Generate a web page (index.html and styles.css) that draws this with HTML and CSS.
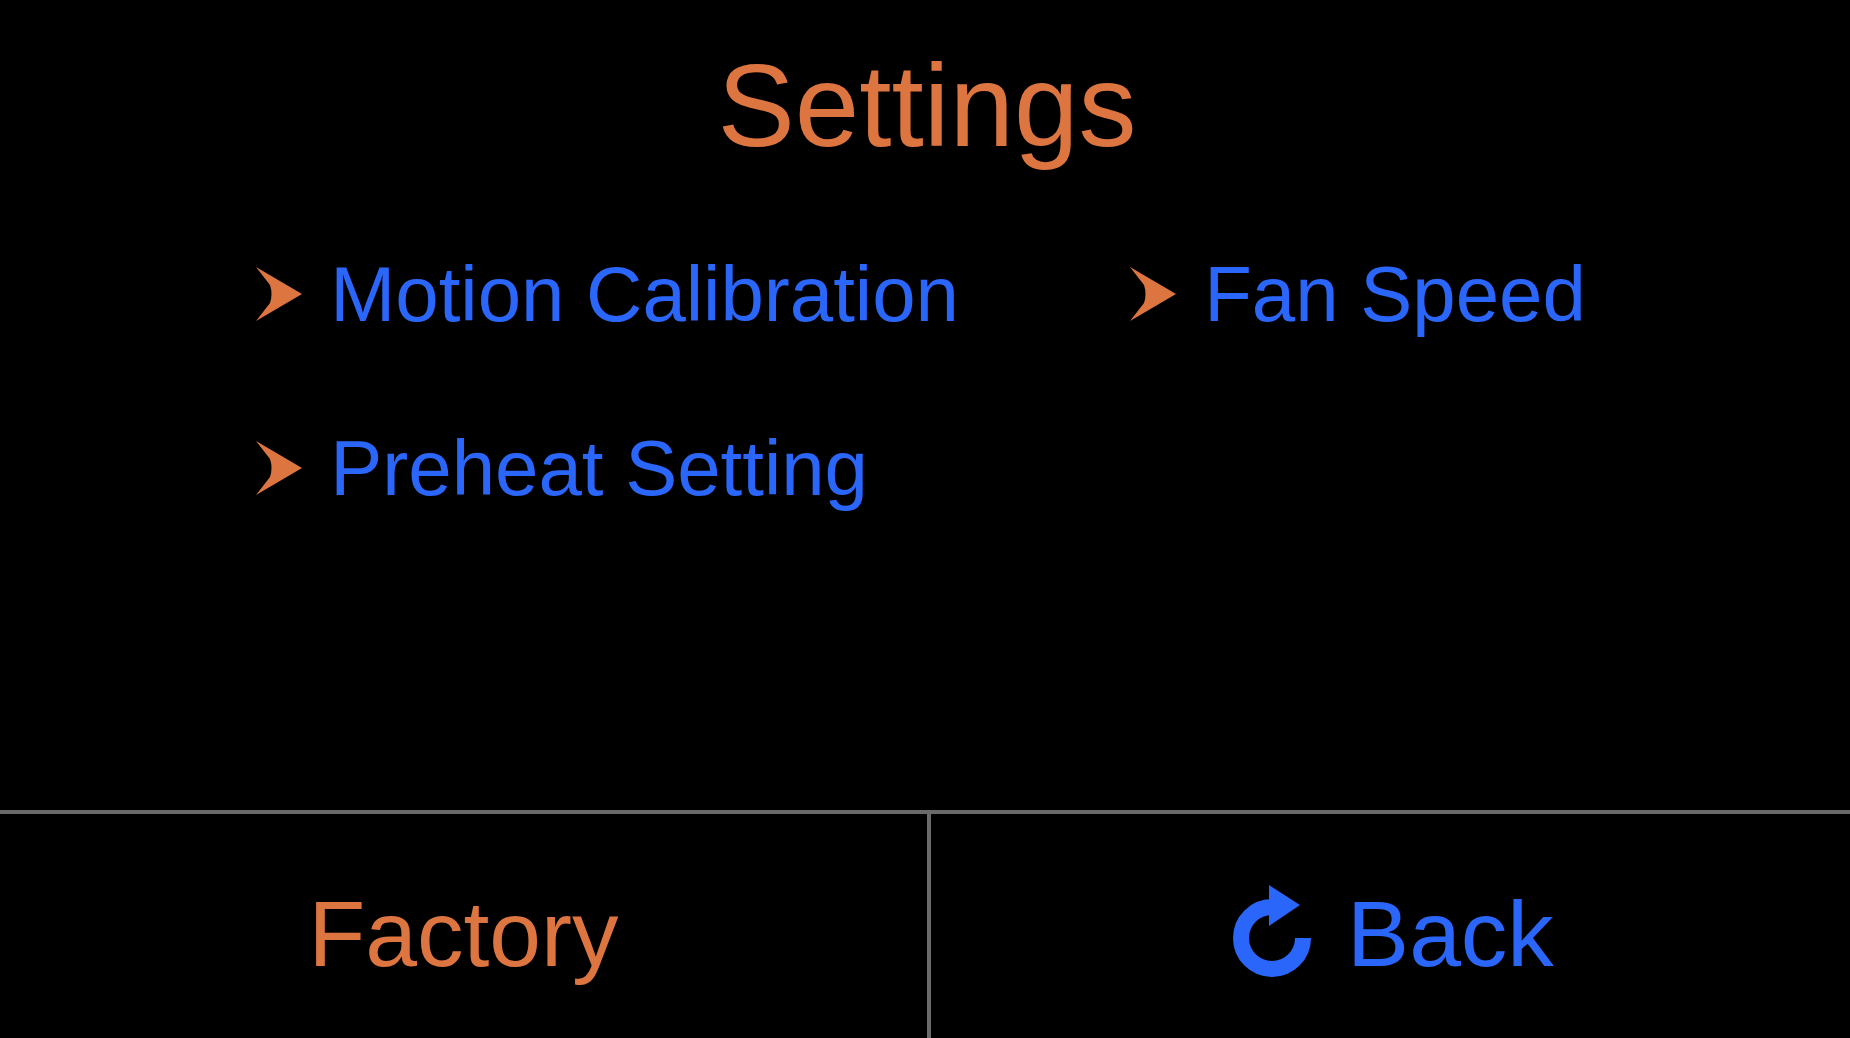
FILE: index.html
```
<!DOCTYPE html>
<html lang="en">
<head>
  <meta charset="UTF-8">
  <title>Settings</title>
  <link rel="stylesheet" href="styles.css">
</head>
<body>
  <header><h1>Settings</h1></header>
  <main>
    <ul class="menu">
      <li><a href="#motion">
        <svg class="arrow" viewBox="0 0 48 56" aria-hidden="true"><path d="M1 1L47 28L1 55L15 37Q18 28 15 19Z"/></svg>
        Motion Calibration</a></li>
      <li><a href="#fan">
        <svg class="arrow" viewBox="0 0 48 56" aria-hidden="true"><path d="M1 1L47 28L1 55L15 37Q18 28 15 19Z"/></svg>
        Fan Speed</a></li>
      <li><a href="#preheat">
        <svg class="arrow" viewBox="0 0 48 56" aria-hidden="true"><path d="M1 1L47 28L1 55L15 37Q18 28 15 19Z"/></svg>
        Preheat Setting</a></li>
    </ul>
  </main>
  <footer>
    <button type="button" class="factory">Factory</button>
    <button type="button" class="back">
      <svg viewBox="0 0 78 98" aria-hidden="true">
        <path class="ring" d="M39 22A31 31 0 1 0 70 53"/>
        <path class="head" d="M36 0L67 20L36 41Z"/>
      </svg>
      Back
    </button>
  </footer>
</body>
</html>
```

FILE: styles.css
```
*{margin:0;padding:0;box-sizing:border-box;}
body{
  display:flex;
  flex-direction:column;
  min-height:100vh;
  background:#000;
  color:#dd7540;
  font-family:"Liberation Sans",Arial,sans-serif;
}
header{padding:46px 0 0 4px;text-align:center;}
h1{font-size:116px;line-height:120px;font-weight:normal;}
main{flex:1;padding:84px 0 40px 13.8%;}

.menu{
  display:grid;
  grid-template-columns:54.8% auto;
  row-gap:86px;
  list-style:none;
}
.menu a{
  display:flex;
  align-items:center;
  gap:27px;
  color:#2b66fb;
  font-size:78px;
  line-height:88px;
  text-decoration:none;
  white-space:nowrap;
}
.arrow{width:48px;height:56px;fill:#dd7540;}

footer{
  display:grid;
  grid-template-columns:931fr 919fr;
  border-top:4px solid #6a6a6a;
}
button{
  display:flex;
  align-items:center;
  justify-content:center;
  gap:36px;
  padding:68px 0 52px;
  border:0;
  background:none;
  font-family:inherit;
  font-size:93px;
  line-height:104px;
  cursor:pointer;
}
.factory{border-right:4px solid #6a6a6a;color:#dd7540;}
.back{padding-left:6px;color:#2b66fb;}
.back svg{width:78px;height:98px;}
.ring{fill:none;stroke:#2b66fb;stroke-width:16;}
.head{fill:#2b66fb;}
```
